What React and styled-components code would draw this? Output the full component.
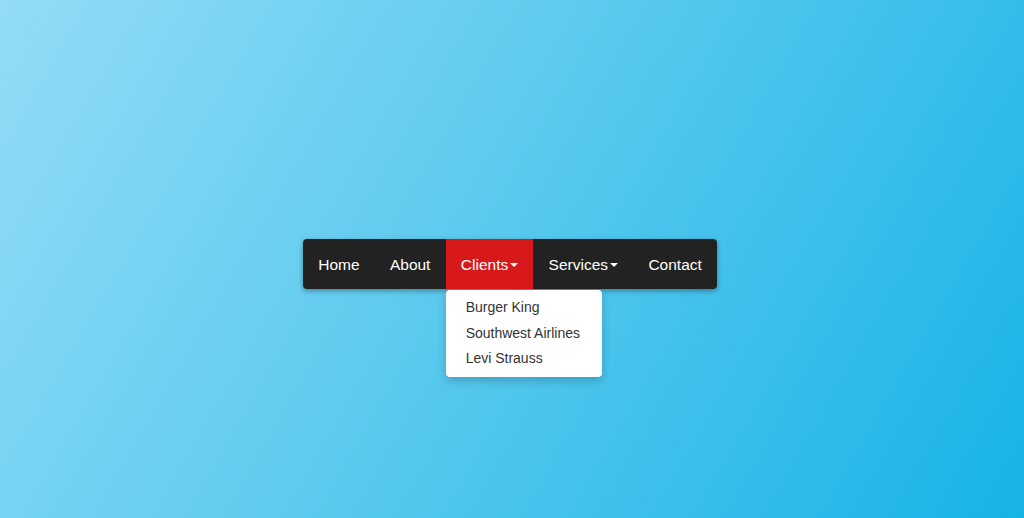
import React from "react";
import styled, { createGlobalStyle } from "styled-components";

const GlobalStyle = createGlobalStyle`
  html, body {
    margin: 0;
    padding: 0;
  }
  body {
    min-height: 100vh;
    font-family: "Liberation Sans", Arial, sans-serif;
    background: linear-gradient(120deg, #93dcf5 0%, #5ccaef 45%, #17b3e6 100%);
  }
`;

const Page = styled.div`
  width: 1024px;
  height: 518px;
  box-sizing: border-box;
  padding: 239px 0 0 303px;
`;

const Nav = styled.ul`
  display: inline-flex;
  margin: 0;
  padding: 0;
  list-style: none;
  background: #222;
  border-radius: 4px;
  box-shadow: 0 2px 5px rgba(0, 0, 0, 0.35);
`;

const NavItem = styled.li`
  position: relative;
  background: ${(p) => (p.$active ? "#d7191c" : "transparent")};
`;

const NavLink = styled.a`
  display: flex;
  align-items: center;
  padding: 16px 15.2px 14px;
  line-height: 20px;
  font-size: 15.5px;
  color: #fff;
  text-decoration: none;
`;

const Caret = styled.span`
  display: inline-block;
  width: 0;
  height: 0;
  margin-left: 2px;
  border-top: 4px solid #fff;
  border-left: 4px solid transparent;
  border-right: 4px solid transparent;
`;

const Menu = styled.ul`
  position: absolute;
  top: 100%;
  left: 0;
  margin: 1px 0 0;
  padding: 5px 0;
  list-style: none;
  min-width: 156px;
  background: #fff;
  border-radius: 4px;
  box-shadow: 0 4px 10px rgba(0, 0, 0, 0.2);
`;

const MenuLink = styled.a`
  display: block;
  padding: 3px 20px;
  line-height: 19.5px;
  font-size: 14px;
  color: #333;
  white-space: nowrap;
  text-decoration: none;
`;

const items = [
  { label: "Home" },
  { label: "About" },
  { label: "Clients", dropdown: true, active: true, sub: ["Burger King", "Southwest Airlines", "Levi Strauss"] },
  { label: "Services", dropdown: true },
  { label: "Contact" },
];

export default function App() {
  return (
    <>
      <GlobalStyle />
      <Page>
        <Nav>
          {items.map((item) => (
            <NavItem key={item.label} $active={item.active}>
              <NavLink href="#">
                {item.label}
                {item.dropdown && <Caret />}
              </NavLink>
              {item.sub && (
                <Menu>
                  {item.sub.map((s) => (
                    <li key={s}>
                      <MenuLink href="#">{s}</MenuLink>
                    </li>
                  ))}
                </Menu>
              )}
            </NavItem>
          ))}
        </Nav>
      </Page>
    </>
  );
}
